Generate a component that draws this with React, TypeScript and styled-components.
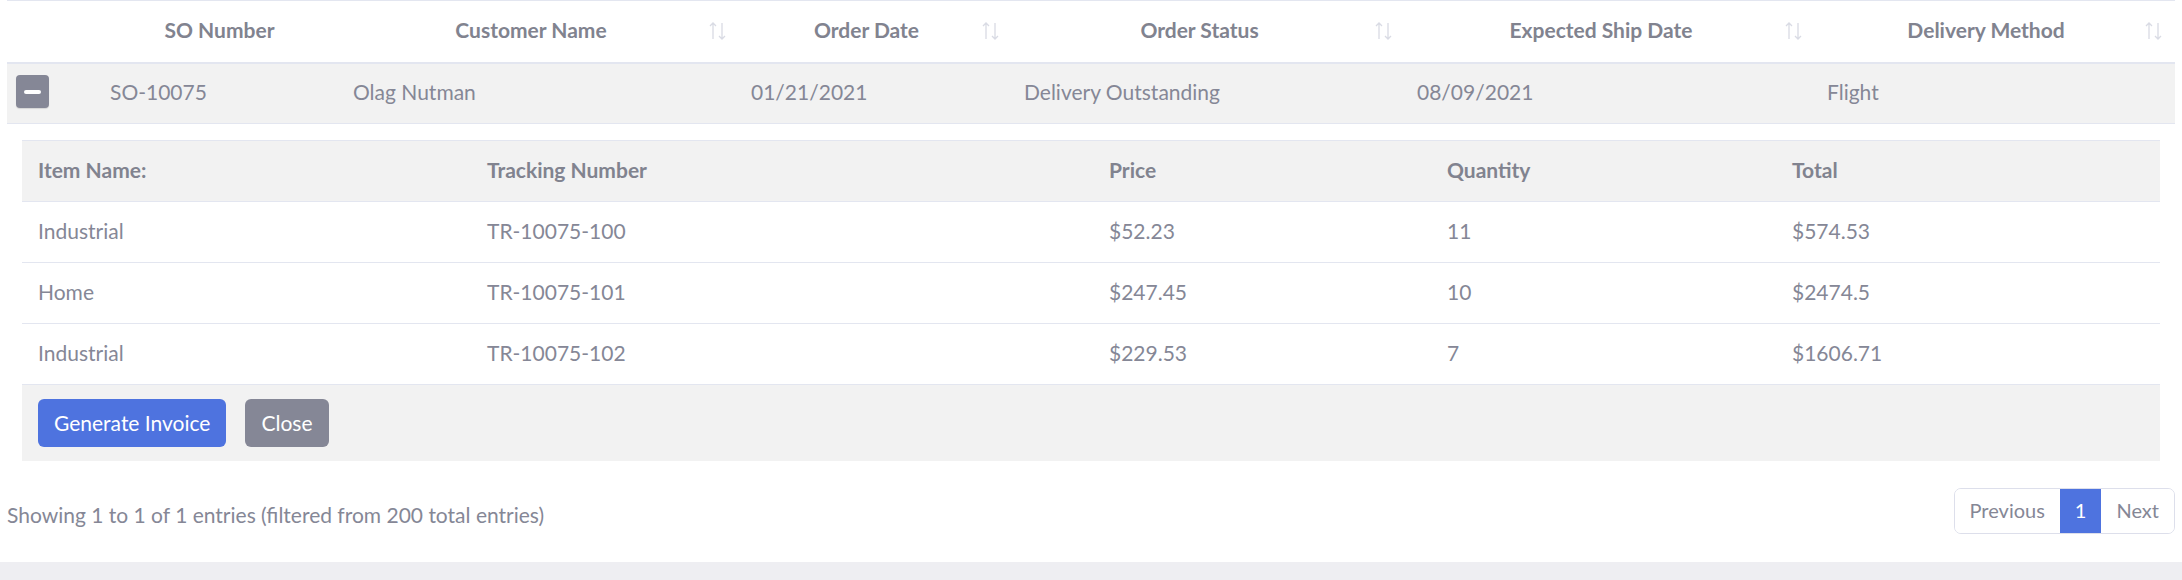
import React from "react";
import styled, { createGlobalStyle } from "styled-components";

const Global = createGlobalStyle`
  html, body { margin: 0; padding: 0; background: #eeeef2; }
  body { font-family: Lato, "Noto Sans", sans-serif; color: #858796; }
  * { box-sizing: border-box; }
`;

const Card = styled.div`
  background: #fff;
  padding: 0 7px 28px 7px;
  box-shadow: 0 2px 6px rgba(58, 59, 69, 0.12);
`;

const Table = styled.table`
  width: 100%;
  border-collapse: collapse;
  table-layout: fixed;
  font-size: 21px;
  border-top: 1px solid #e3e6f0;
`;

const HeadCell = styled.th<{ $sortable?: boolean }>`
  height: 62px;
  padding: 0 ${(p) => (p.$sortable ? "30px" : "12px")} 4px 12px;
  text-align: center;
  font-weight: 700;
  color: #81838f;
  border-bottom: 2px solid #e3e6f0;
  position: relative;
  white-space: nowrap;
`;

const SortIcon = styled.svg`
  position: absolute;
  right: 11px;
  top: 20px;
`;

const MainRow = styled.tr`
  background: #f2f2f2;
  border-bottom: 1px solid #e3e6f0;
`;

const Cell = styled.td`
  height: 61px;
  padding: 0 12px 3px 12px;
  white-space: nowrap;
`;

const ControlCell = styled.td`
  height: 61px;
  padding: 0 0 0 9px;
`;

const Toggle = styled.button`
  width: 33px;
  height: 33px;
  border: none;
  border-radius: 4px;
  background: #858796;
  display: flex;
  align-items: center;
  justify-content: center;
  padding: 0;
  margin-top: -3px;
  box-shadow: 0 1px 1px rgba(0, 0, 0, 0.12);
`;

const Bar = styled.span`
  width: 17px;
  height: 4px;
  border-radius: 2px;
  background: #fff;
`;

const ChildCell = styled.td`
  padding: 16px 15px 15px 15px;
`;

const Nested = styled.table`
  width: 100%;
  border-collapse: collapse;
  table-layout: fixed;
  font-size: 21px;
`;

const NHead = styled.th`
  background: #f2f2f2;
  height: 61px;
  padding: 0 16px 3px 16px;
  text-align: left;
  font-weight: 700;
  color: #81838f;
  border-top: 1px solid #e3e6f0;
`;

const NCell = styled.td`
  height: 61px;
  padding: 0 16px 3px 16px;
  border-top: 1px solid #e3e6f0;
  white-space: nowrap;
`;

const ActionCell = styled.td`
  background: #f2f2f2;
  border-top: 1px solid #e3e6f0;
  padding: 14px 16px;
`;

const Actions = styled.div`
  display: flex;
  gap: 19px;
`;

const Btn = styled.button<{ $variant: "primary" | "secondary" }>`
  height: 48px;
  padding: 0 16px 2px 16px;
  border: none;
  border-radius: 6px;
  font-family: Lato, "Noto Sans", sans-serif;
  font-size: 21px;
  color: #fff;
  background: ${(p) => (p.$variant === "primary" ? "#4e73df" : "#858796")};
`;

const Footer = styled.div`
  display: flex;
  justify-content: space-between;
  align-items: center;
  margin-top: 12px;
`;

const Info = styled.div`
  font-size: 21px;
  padding-top: 7px;
`;

const Pager = styled.div`
  display: flex;
  border: 1px solid #dddfeb;
  border-radius: 7px;
  overflow: hidden;
  height: 46px;
`;

const PageItem = styled.div<{ $active?: boolean }>`
  display: flex;
  align-items: center;
  padding: 0 15px 2px 15px;
  font-size: 20px;
  color: ${(p) => (p.$active ? "#fff" : "#858796")};
  background: ${(p) => (p.$active ? "#4e73df" : "#fff")};
`;

const Sort = () => (
  <SortIcon width="20" height="20" viewBox="0 0 20 20" fill="none" stroke="#d9dbe4" strokeWidth="1.3">
    <path d="M5 18V2M2 5l3-3 3 3" />
    <path d="M14 2v16M11 15l3 3 3-3" />
  </SortIcon>
);

const headers: { label: string; sortable: boolean }[] = [
  { label: "SO Number", sortable: false },
  { label: "Customer Name", sortable: true },
  { label: "Order Date", sortable: true },
  { label: "Order Status", sortable: true },
  { label: "Expected Ship Date", sortable: true },
  { label: "Delivery Method", sortable: true },
];

const items = [
  ["Industrial", "TR-10075-100", "$52.23", "11", "$574.53"],
  ["Home", "TR-10075-101", "$247.45", "10", "$2474.5"],
  ["Industrial", "TR-10075-102", "$229.53", "7", "$1606.71"],
];

export default function App() {
  return (
    <>
      <Global />
      <Card>
        <Table>
          <colgroup>
            <col style={{ width: 91 }} />
            <col style={{ width: 243 }} />
            <col style={{ width: 398 }} />
            <col style={{ width: 273 }} />
            <col style={{ width: 393 }} />
            <col style={{ width: 410 }} />
            <col style={{ width: 360 }} />
          </colgroup>
          <thead>
            <tr>
              <HeadCell />
              {headers.map((h) => (
                <HeadCell key={h.label} $sortable={h.sortable}>
                  {h.label}
                  {h.sortable && <Sort />}
                </HeadCell>
              ))}
            </tr>
          </thead>
          <tbody>
            <MainRow>
              <ControlCell>
                <Toggle aria-label="collapse">
                  <Bar />
                </Toggle>
              </ControlCell>
              <Cell>SO-10075</Cell>
              <Cell>Olag Nutman</Cell>
              <Cell>01/21/2021</Cell>
              <Cell>Delivery Outstanding</Cell>
              <Cell>08/09/2021</Cell>
              <Cell>Flight</Cell>
            </MainRow>
            <tr>
              <ChildCell colSpan={7}>
                <Nested>
                  <colgroup>
                    <col style={{ width: 449 }} />
                    <col style={{ width: 622 }} />
                    <col style={{ width: 338 }} />
                    <col style={{ width: 345 }} />
                    <col style={{ width: 384 }} />
                  </colgroup>
                  <thead>
                    <tr>
                      <NHead>Item Name:</NHead>
                      <NHead>Tracking Number</NHead>
                      <NHead>Price</NHead>
                      <NHead>Quantity</NHead>
                      <NHead>Total</NHead>
                    </tr>
                  </thead>
                  <tbody>
                    {items.map((r, i) => (
                      <tr key={i}>
                        {r.map((c, j) => (
                          <NCell key={j}>{c}</NCell>
                        ))}
                      </tr>
                    ))}
                    <tr>
                      <ActionCell colSpan={5}>
                        <Actions>
                          <Btn $variant="primary">Generate Invoice</Btn>
                          <Btn $variant="secondary">Close</Btn>
                        </Actions>
                      </ActionCell>
                    </tr>
                  </tbody>
                </Nested>
              </ChildCell>
            </tr>
          </tbody>
        </Table>
        <Footer>
          <Info>Showing 1 to 1 of 1 entries (filtered from 200 total entries)</Info>
          <Pager>
            <PageItem>Previous</PageItem>
            <PageItem $active>1</PageItem>
            <PageItem>Next</PageItem>
          </Pager>
        </Footer>
      </Card>
    </>
  );
}
